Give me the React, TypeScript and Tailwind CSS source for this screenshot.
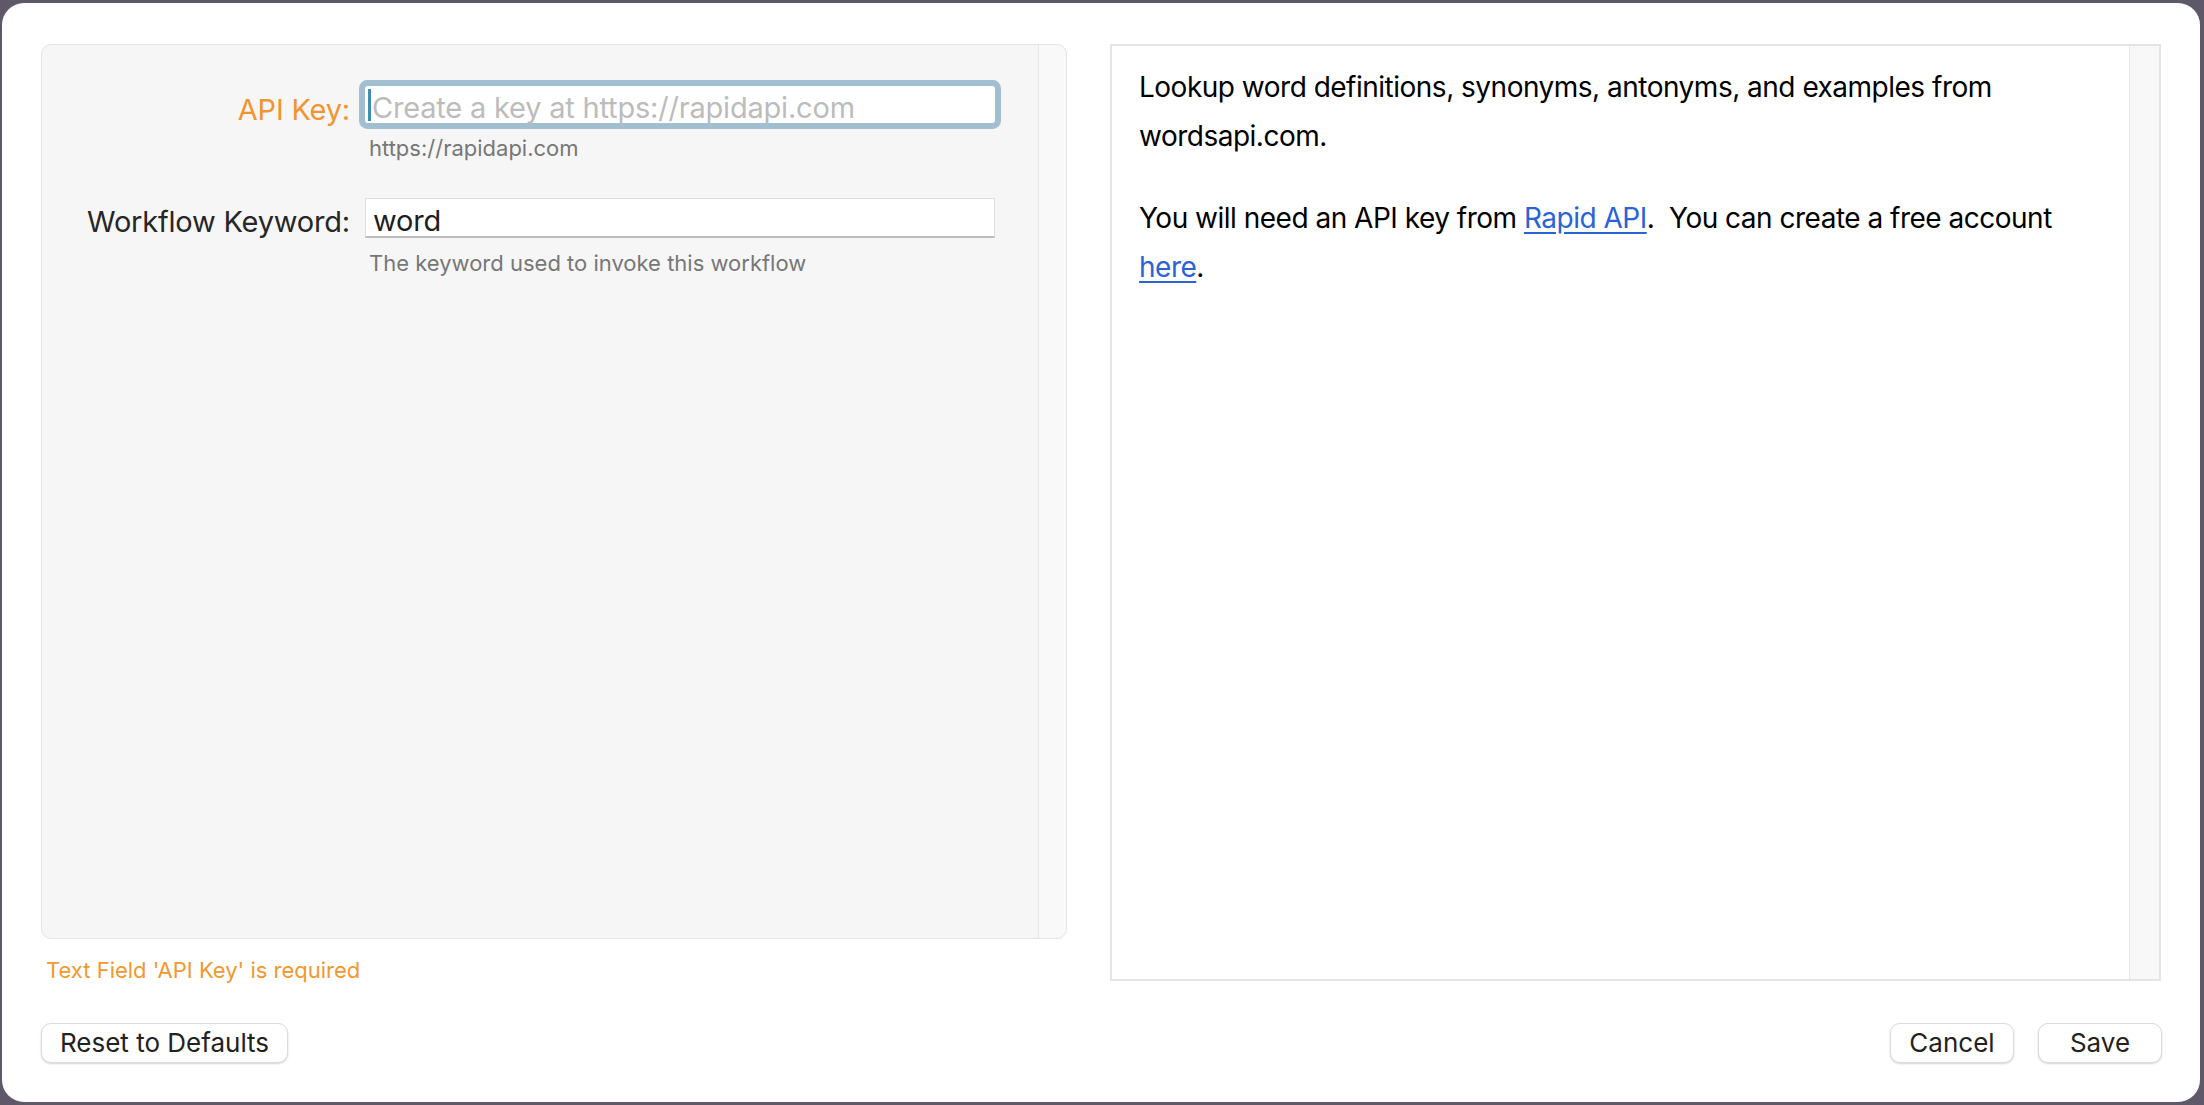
const sans = "font-['Inter','Liberation_Sans',sans-serif]";

function Field({
  label,
  labelClass,
  value,
  placeholder,
  focused,
  hint,
}: {
  label: string;
  labelClass: string;
  value?: string;
  placeholder?: string;
  focused?: boolean;
  hint: string;
}) {
  return (
    <div className="flex">
      <div className={`w-[308px] pt-[4px] text-right text-[29px] leading-[40px] tracking-[-0.2px] ${labelClass}`}>{label}</div>
      <div className="ml-[15px] flex w-[630px] flex-col">
        {focused ? (
          <div className="flex h-[37px] items-center rounded-[3px] bg-white ring-[6px] ring-[#a2bfd1]">
            <span className="ml-[3px] h-[32px] w-[3px] bg-[#3d8db5]" />
            <span className="ml-[1px] pt-[5px] text-[29px] leading-[37px] tracking-[-0.2px] text-[#bcbcbc]">{placeholder}</span>
          </div>
        ) : (
          <div className="flex h-[40px] items-center border border-b-2 border-[#dedede] border-b-[#bdbdbd] bg-white pl-[7px]">
            <span className="pt-[6px] text-[29px] leading-[37px] tracking-[-0.2px] text-[#1e1e1e]">{value}</span>
          </div>
        )}
        <p className="mt-[12px] pl-[4px] text-[22px] leading-[26px] text-[#777777]">{hint}</p>
      </div>
    </div>
  );
}

function Button({ children, width }: { children: string; width: string }) {
  return (
    <button
      className={`${width} h-[40px] rounded-[10px] border border-[#dcdcdc] bg-white text-[26px] leading-[38px] text-[#222222] shadow-[0_1px_2px_rgba(0,0,0,0.18)]`}
    >
      {children}
    </button>
  );
}

export default function App() {
  return (
    <div className={`h-[1105px] w-[2204px] overflow-hidden bg-[#5f5868] pl-[2px] pt-[3px] ${sans}`}>
      <div className="flex h-[1099px] w-[2198px] flex-col rounded-[22px] bg-white pl-[39px] pr-[38px] pt-[41px]">
        <div className="flex gap-[43px]">
          {/* form side */}
          <div className="flex w-[1026px] flex-col">
            <div className="flex h-[895px] rounded-[10px] border border-[#e4e4e4] bg-[#f6f6f6]">
              <div className="flex flex-1 flex-col pt-[41px]">
                <Field
                  label="API Key:"
                  labelClass="text-[#f0952f]"
                  placeholder="Create a key at https://rapidapi.com"
                  focused
                  hint="https://rapidapi.com"
                />
                <div className="h-[37px]" />
                <Field
                  label="Workflow Keyword:"
                  labelClass="text-[#262626]"
                  value="word"
                  hint="The keyword used to invoke this workflow"
                />
              </div>
              <div className="w-[28px] rounded-r-[10px] border-l border-[#e6e6e6] bg-[#f9f9f9]" />
            </div>
            <p className="mt-[18px] pl-[5px] text-[22px] leading-[26px] text-[#f3982f]">Text Field 'API Key' is required</p>
          </div>

          {/* description side */}
          <div className="flex h-[937px] w-[1051px] border-2 border-[#e5e5e5] bg-white">
            <div className="flex-1 pl-[27px] pt-[17px] text-[28px] leading-[49px] tracking-[-0.5px] text-black">
              <p>
                Lookup word definitions, synonyms, antonyms, and examples from
                <br />
                wordsapi.com.
              </p>
              <p className="mt-[33px]">
                You will need an API key from{" "}
                <a className="text-[#2a63d6] underline underline-offset-[4px]">Rapid API</a>.&nbsp; You can create a free
                account
                <br />
                <a className="text-[#2a63d6] underline underline-offset-[4px]">here</a>.
              </p>
            </div>
            <div className="w-[30px] border-l border-[#e8e8e8] bg-[#f8f8f8]" />
          </div>
        </div>

        <div className="mt-[40px] flex items-center">
          <Button width="w-[247px]">Reset to Defaults</Button>
          <div className="flex-1" />
          <div className="flex gap-[24px]">
            <Button width="w-[124px]">Cancel</Button>
            <Button width="w-[124px]">Save</Button>
          </div>
        </div>
      </div>
    </div>
  );
}
